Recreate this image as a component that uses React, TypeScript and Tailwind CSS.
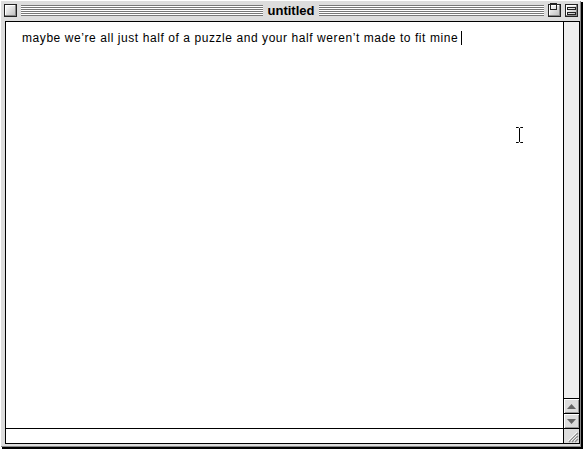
import React from "react";

const stripes =
  "bg-[repeating-linear-gradient(to_bottom,#777_0px,#777_1px,#ffffff_1px,#ffffff_2px)]";

function TitleBox({ children }: { children?: React.ReactNode }) {
  return (
    <div className="w-[13px] h-[13px] border border-[#222] bg-[linear-gradient(135deg,#ffffff,#bbbbbb)] flex items-center justify-center shrink-0 shadow-[inset_-1px_-1px_0_#888,inset_1px_1px_0_#fff]">
      {children}
    </div>
  );
}

function ArrowBox({ up }: { up?: boolean }) {
  return (
    <div className="h-[15px] bg-[#dddddd] border-t border-black flex items-center justify-center shadow-[inset_1px_1px_0_#fff,inset_-1px_-1px_0_#999]">
      <svg width="9" height="5" viewBox="0 0 9 5">
        {up ? (
          <polygon points="0,5 9,5 4.5,0" fill="#666" />
        ) : (
          <polygon points="0,0 9,0 4.5,5" fill="#666" />
        )}
      </svg>
    </div>
  );
}

export default function App() {
  return (
    <div className="w-[584px] h-[450px] bg-white relative font-['Liberation_Sans',sans-serif]">
      <div className="w-[581px] h-[447px] bg-[#dddddd] border-t border-l border-white shadow-[2px_2px_0_#000,inset_-1px_-1px_0_#888] flex flex-col">
        {/* title bar */}
        <div className="h-[19px] grid grid-cols-[1fr_auto_1fr] items-center pl-[3px] pr-[3px]">
          <div className="flex items-center gap-[4px]">
            <TitleBox />
            <div className={`flex-1 h-[11px] ${stripes}`} />
          </div>
          <div className="px-[5px] text-[13px] font-bold text-black leading-none">untitled</div>
          <div className="flex items-center gap-[4px]">
            <div className={`flex-1 h-[11px] ${stripes}`} />
            <TitleBox>
              <div className="w-[7px] h-[7px] border border-[#222] self-start ml-[-2px] mt-[-2px]" />
            </TitleBox>
            <TitleBox>
              <div className="flex flex-col gap-[2px]">
                <div className="w-[9px] h-[3px] border border-[#222]" />
                <div className="w-[9px] h-[3px] border border-[#222]" />
              </div>
            </TitleBox>
          </div>
        </div>
        {/* content */}
        <div className="flex-1 flex pl-[4px] pr-[1px] pb-[3px] pt-[1px]">
          <div className="flex-1 border border-black flex flex-col bg-white">
            <div className="flex-1 flex">
              <div className="flex-1 relative pl-[16px] pt-[3px]">
                <span className="text-[12px] leading-[14px] text-black tracking-[0.57px]">
                  maybe we’re all just half of a puzzle and your half weren’t made to fit mine
                </span>
                <span className="inline-block w-[1px] h-[14px] bg-black align-[-3px] ml-[3px]" />
                <svg
                  className="absolute left-[509px] top-[105px]"
                  width="9"
                  height="16"
                  viewBox="0 0 9 16"
                >
                  <path d="M1 0.5h2.5l1 1 1-1H8M4.5 1.5v13M1 15.5h2.5l1-1 1 1H8" stroke="#000" fill="none" strokeWidth="1" />
                </svg>
              </div>
              <div className="w-[16px] border-l border-black bg-[#eeeeee] flex flex-col justify-end">
                <ArrowBox up />
                <ArrowBox />
              </div>
            </div>
            <div className="h-[15px] border-t border-black flex">
              <div className="flex-1" />
              <div className="w-[16px] border-l border-black bg-[#dddddd] flex items-end justify-end">
                <svg width="14" height="14" viewBox="0 0 14 14">
                  <path d="M4 13L13 4M7 13L13 7M10 13L13 10" stroke="#888" strokeWidth="1.2" />
                  <path d="M3 12L12 3M6 12L12 6M9 12L12 9" stroke="#fff" strokeWidth="0.8" />
                </svg>
              </div>
            </div>
          </div>
        </div>
      </div>
    </div>
  );
}
